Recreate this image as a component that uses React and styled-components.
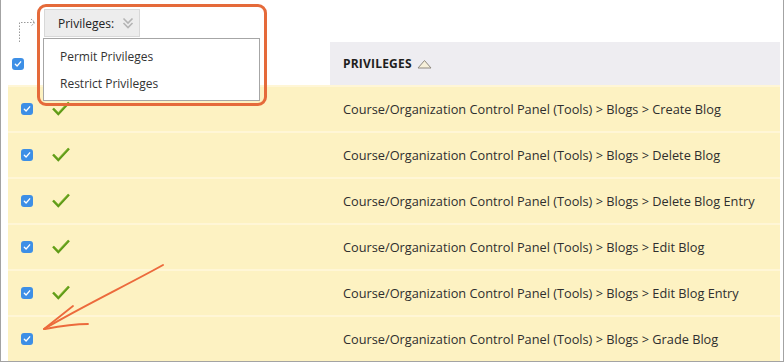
import React from 'react'
import styled, { createGlobalStyle } from 'styled-components'

const GlobalStyle = createGlobalStyle`
  body {
    margin: 0;
    background: #fff;
    font-family: "Open Sans", "Liberation Sans", sans-serif;
  }
`

const rows = [
  { name: 'Create Blog', granted: true },
  { name: 'Delete Blog', granted: true },
  { name: 'Delete Blog Entry', granted: true },
  { name: 'Edit Blog', granted: true },
  { name: 'Edit Blog Entry', granted: true },
  { name: 'Grade Blog', granted: false },
]

const Frame = styled.div`
  position: relative;
  width: 772px;
  height: 361px;
  border: 1px solid #a3a3a3;
  border-top: none;
  padding: 0 3px 0 7px;
  box-sizing: content-box;
  overflow: hidden;
`

const TopBar = styled.div`
  height: 42px;
  display: flex;
  align-items: flex-start;
  gap: 7px;
  padding-left: 10px;
`

const Connector = styled.svg`
  margin-top: 14px;
  flex: none;
`

const ActionWrap = styled.div`
  position: relative;
  margin-top: 9px;
`

const ActionButton = styled.button`
  display: flex;
  align-items: center;
  gap: 8px;
  height: 28px;
  width: 96px;
  padding: 0 0 0 13px;
  background: #ededed;
  border: 1px solid #d8d8d8;
  font-family: inherit;
  font-size: 12px;
  color: #222;
  cursor: pointer;
`

const Menu = styled.ul`
  position: absolute;
  top: 29px;
  left: -1px;
  width: 215px;
  margin: 0;
  padding: 4px 0 0;
  list-style: none;
  background: #fff;
  border: 1px solid #a6a6a6;
  height: 57px;
`

const MenuItem = styled.li`
  font-size: 12px;
  color: #333;
  padding-left: 16px;
  height: 27px;
  line-height: 27px;
`

const Highlight = styled.div`
  position: absolute;
  left: 36px;
  top: 4px;
  width: 224px;
  height: 96px;
  border: 3px solid #e56a3a;
  border-radius: 9px;
  pointer-events: none;
`

const Table = styled.div`
  display: grid;
  grid-template-columns: 32px 290px 1fr;
`

const HeadCell = styled.div`
  height: 43px;
  display: flex;
  align-items: center;
  background: ${p => (p.$sorted ? '#eeedf1' : '#fff')};
  padding-left: ${p => p.$pad || 0}px;
  font-size: 12px;
  font-weight: 700;
  color: #1e1e1e;
  letter-spacing: 0.2px;
  gap: 5px;
`

const Cell = styled.div`
  height: 44px;
  display: flex;
  align-items: center;
  background: #fdf2c2;
  border-top: 2px solid #fff6d6;
  padding-left: ${p => p.$pad || 0}px;
  padding-bottom: 1px;
  box-sizing: border-box;
  height: 46px;
  font-size: 12.75px;
  color: #2e2e2e;
`

const Box = styled.span`
  width: 12px;
  height: 12px;
  border-radius: 3px;
  background: #3d8fe6;
  display: inline-flex;
  align-items: center;
  justify-content: center;
`

const Arrow = styled.svg`
  position: absolute;
  left: 0;
  top: 0;
  pointer-events: none;
`

const Checkbox = () => (
  <Box>
    <svg width="8" height="8" viewBox="0 0 8 8">
      <path d="M1.3 4.2 L3.1 6 L6.7 1.8" fill="none" stroke="#fff" strokeWidth="1.3" strokeLinecap="round" strokeLinejoin="round" />
    </svg>
  </Box>
)

const GreenCheck = () => (
  <svg width="18" height="15" viewBox="0 0 18 15">
    <path d="M1 7.5 L6.3 13 L17 1.5" fill="none" stroke="#5f9a17" strokeWidth="2.4" strokeLinejoin="miter" />
    <path d="M1.8 7 L6.3 11.6 L16.4 1" fill="none" stroke="#86bd35" strokeWidth="0.8" />
  </svg>
)

const App = () => {
  return (
    <>
      <GlobalStyle />
      <Frame>
        <TopBar>
          <Connector width="19" height="28" viewBox="0 0 19 28">
            <path d="M1.5 28 V8.5 H16" fill="none" stroke="#9a9a9a" strokeWidth="1" strokeDasharray="1.5 1.5" />
            <path d="M13 5 L17 8.5 L13 12" fill="none" stroke="#9a9a9a" strokeWidth="1" strokeDasharray="1.5 1" />
          </Connector>
          <ActionWrap>
            <ActionButton type="button">
              Privileges:
              <svg width="12" height="12" viewBox="0 0 12 12">
                <path d="M1.5 1.5 L6 6 L10.5 1.5 M1.5 6 L6 10.5 L10.5 6" fill="none" stroke="#b4b4b4" strokeWidth="1.6" />
              </svg>
            </ActionButton>
            <Menu>
              <MenuItem>Permit Privileges</MenuItem>
              <MenuItem>Restrict Privileges</MenuItem>
            </Menu>
          </ActionWrap>
        </TopBar>
        <Table>
          <HeadCell $pad={4}>
            <Checkbox />
          </HeadCell>
          <HeadCell />
          <HeadCell $sorted $pad={13}>
            PRIVILEGES
            <svg width="15" height="10" viewBox="0 0 15 10">
              <path d="M1 9 L7.5 1.5 L14 9 Z" fill="#f7f0da" stroke="#8f8a80" strokeWidth="1" />
            </svg>
          </HeadCell>
          {rows.map(r => (
            <React.Fragment key={r.name}>
              <Cell $pad={13}>
                <Checkbox />
              </Cell>
              <Cell $pad={12}>{r.granted && <GreenCheck />}</Cell>
              <Cell $pad={13}>Course/Organization Control Panel (Tools) &gt; Blogs &gt; {r.name}</Cell>
            </React.Fragment>
          ))}
        </Table>
        <Highlight />
        <Arrow width="784" height="364" viewBox="0 0 784 364">
          <path d="M162 265 C130 283 80 307 43 329" fill="none" stroke="#ec6a3c" strokeWidth="2" strokeLinecap="round" />
          <path d="M43 329 L72 306" fill="none" stroke="#ec6a3c" strokeWidth="1.8" strokeLinecap="round" />
          <path d="M44 329 C60 326 75 324 87 324" fill="none" stroke="#ec6a3c" strokeWidth="1.8" strokeLinecap="round" />
        </Arrow>
      </Frame>
    </>
  )
}

export default App
